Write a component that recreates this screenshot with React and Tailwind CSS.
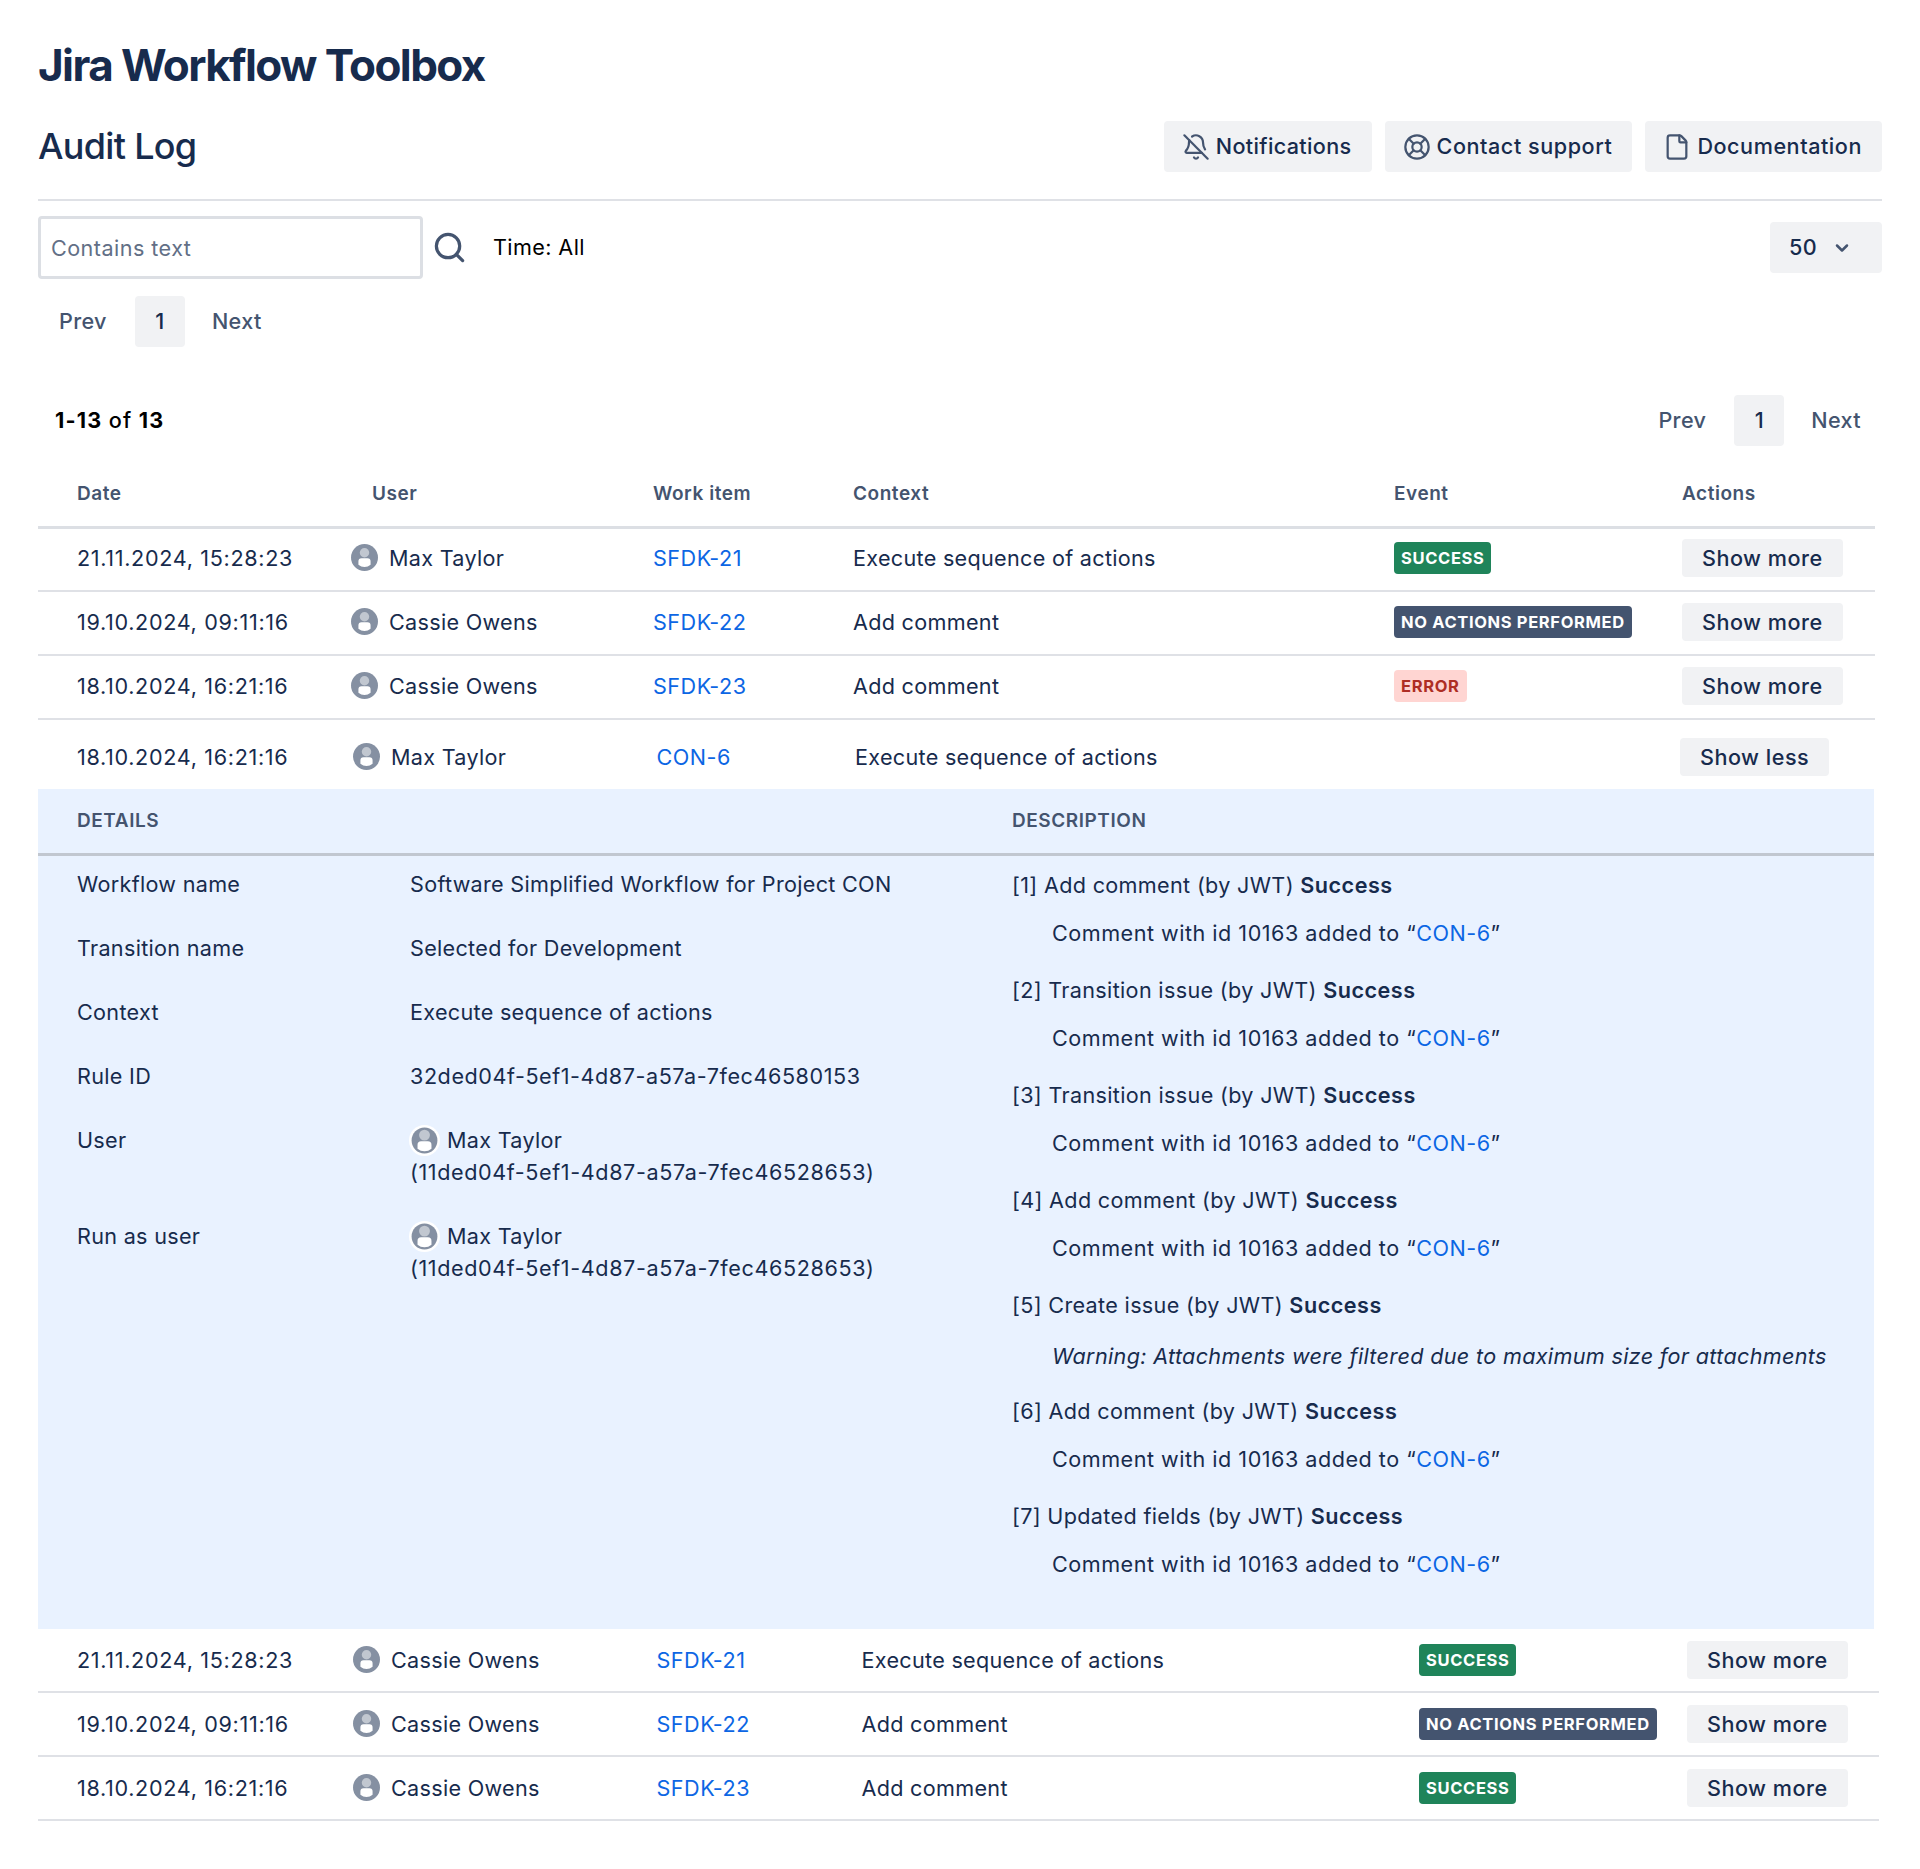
import React from 'react';
import { BellOff, LifeBuoy, File, Search, ChevronDown } from 'lucide-react';

const topRows = [
  { date: '21.11.2024, 15:28:23', user: 'Max Taylor', item: 'SFDK-21', context: 'Execute sequence of actions', event: 'success' },
  { date: '19.10.2024, 09:11:16', user: 'Cassie Owens', item: 'SFDK-22', context: 'Add comment', event: 'none' },
  { date: '18.10.2024, 16:21:16', user: 'Cassie Owens', item: 'SFDK-23', context: 'Add comment', event: 'error' },
];

const bottomRows = [
  { date: '21.11.2024, 15:28:23', user: 'Cassie Owens', item: 'SFDK-21', context: 'Execute sequence of actions', event: 'success' },
  { date: '19.10.2024, 09:11:16', user: 'Cassie Owens', item: 'SFDK-22', context: 'Add comment', event: 'none' },
  { date: '18.10.2024, 16:21:16', user: 'Cassie Owens', item: 'SFDK-23', context: 'Add comment', event: 'success' },
];

const details = [
  ['Workflow name', 'Software Simplified Workflow for Project CON', ''],
  ['Transition name', 'Selected for Development', ''],
  ['Context', 'Execute sequence of actions', ''],
  ['Rule ID', '32ded04f-5ef1-4d87-a57a-7fec46580153', 'tracking-[0.55px]'],
];

const steps = [
  { n: '[1] Add comment (by JWT)' },
  { n: '[2] Transition issue (by JWT)' },
  { n: '[3] Transition issue (by JWT)' },
  { n: '[4] Add comment (by JWT)' },
  { n: '[5] Create issue (by JWT)', warning: 'Warning: Attachments were filtered due to maximum size for attachments' },
  { n: '[6] Add comment (by JWT)' },
  { n: '[7] Updated fields (by JWT)' },
];

function Avatar({ ring }) {
  return (
    <svg viewBox="0 0 24 24" className={ring ? 'w-[31px] h-[31px] -ml-[1px] shrink-0' : 'w-[27px] h-[27px] shrink-0'}>
      {ring && <circle cx="12" cy="12" r="12" fill="#fff" />}
      <circle cx="12" cy="12" r={ring ? 10 : 12} fill="#8590a2" />
      <circle cx="12" cy="7.8" r="4.2" fill="#c1c7d0" />
      <path d="M6.6 15.4a2.8 2.8 0 0 1 2.8-2.8h5.2a2.8 2.8 0 0 1 2.8 2.8v3a8.4 8.4 0 0 1-10.8 0z" fill="#fff" />
    </svg>
  );
}

function Badge({ type }) {
  const base = 'inline-flex items-center h-[32px] px-[7px] rounded-[4px] text-[16.5px] font-bold tracking-[0.65px]';
  if (type === 'success') return <span className={`${base} bg-[#1f845a] text-white`}>SUCCESS</span>;
  if (type === 'none') return <span className={`${base} bg-[#44546f] text-white`}>NO ACTIONS PERFORMED</span>;
  return <span className={`${base} bg-[#ffd5d2] text-[#ae2e24]`}>ERROR</span>;
}

function Btn({ children }) {
  return (
    <button className="h-[38px] px-[20px] rounded-[4px] bg-[#f1f2f4] text-[#172b4d] font-medium tracking-[0.5px]">{children}</button>
  );
}

function HeadBtn({ icon, children, className = 'tracking-[0.55px]' }) {
  return (
    <button className={`h-[51px] pl-[18px] pr-[20px] flex items-center gap-[6px] rounded-[4px] bg-[#f1f2f4] text-[#172b4d] font-medium ${className}`}>
      {icon}
      {children}
    </button>
  );
}

function Pager() {
  return (
    <div className="flex items-center h-[51px] text-[#44546f] font-medium tracking-[0.35px]">
      <span className="pl-[21px] pr-[28px]">Prev</span>
      <span className="w-[50px] h-[51px] flex items-center justify-center rounded-[4px] bg-[#f1f2f4] text-[#172b4d]">1</span>
      <span className="pl-[27px] pr-[21px]">Next</span>
    </div>
  );
}

function UserCell({ name }) {
  return (
    <div className="flex items-center gap-[11px]">
      <Avatar />
      {name}
    </div>
  );
}

function Row({ r, cols, className = '' }) {
  return (
    <div className={`grid ${cols} items-center h-[64px] border-b-2 border-[#dfe1e6] ${className}`}>
      <div className="pl-[39px] tracking-[0.67px]">{r.date}</div>
      <UserCell name={r.user} />
      <a className="text-[#0c66e4] tracking-[0.5px]">{r.item}</a>
      <div>{r.context}</div>
      <div className="flex"><Badge type={r.event} /></div>
      <div className="flex"><Btn>Show more</Btn></div>
    </div>
  );
}

function UserValue({ name, id }) {
  return (
    <div className="leading-[32px]">
      <div className="flex items-center gap-[7px] h-[32px]">
        <Avatar ring />
        {name}
      </div>
      <div className="tracking-[0.6px]">{id}</div>
    </div>
  );
}

export default function App() {
  const iconCls = 'w-[28px] h-[28px] text-[#44546f]';
  return (
    <div className="min-h-[1869px] bg-white px-[38px] pt-[40px] pb-[47px] text-[21.6px] tracking-[0.3px] text-[#172b4d] [font-family:Inter,sans-serif]">
      <h1 className="text-[44px] leading-[50px] font-bold tracking-[-1.6px]">Jira Workflow Toolbox</h1>

      <div className="mt-[31px] flex items-center justify-between pb-[27px] border-b-2 border-[#dfe1e6]">
        <h2 className="text-[36px] leading-[51px] font-medium tracking-[-0.7px]">Audit Log</h2>
        <div className="flex gap-[13px]">
          <HeadBtn className="tracking-[0.35px]" icon={<BellOff className={iconCls} strokeWidth={1.9} />}>Notifications</HeadBtn>
          <HeadBtn icon={<LifeBuoy className={iconCls} strokeWidth={1.9} />}>Contact support</HeadBtn>
          <HeadBtn icon={<File className={iconCls} strokeWidth={1.9} />}>Documentation</HeadBtn>
        </div>
      </div>

      <div className="mt-[15px] flex items-center">
        <input
          placeholder="Contains text"
          className="w-[385px] h-[63px] px-[10px] border-[3px] border-[#dcdfe4] rounded-[4px] bg-white outline-none tracking-[0.45px] placeholder:text-[#626f86]"
        />
        <Search className="ml-[9px] w-[35px] h-[35px] text-[#44546f]" strokeWidth={2.2} />
        <span className="ml-[26px] text-black tracking-[0.4px]">Time: All</span>
        <button className="ml-auto w-[112px] h-[51px] pl-[19px] flex items-center gap-[15px] rounded-[4px] bg-[#f1f2f4] font-medium tracking-[0.5px]">
          50
          <ChevronDown className="w-[20px] h-[20px] text-[#44546f]" strokeWidth={3} />
        </button>
      </div>

      <div className="mt-[17px]"><Pager /></div>

      <div className="mt-[48px] flex items-center justify-between">
        <div className="pl-[17px] font-bold text-black tracking-[1.2px]">1-13 <span className="font-medium">of</span> 13</div>
        <Pager />
      </div>

      <div className="w-[1837px]">
        <div className="grid grid-cols-[313px_302px_200px_541px_288px_1fr] items-center pt-[32px] pb-[16px] -mb-[1px] border-b-[3px] border-[#dcdfe4] text-[19px] leading-[32px] font-semibold tracking-[0.55px] text-[#44546f]">
          <div className="pl-[39px]">Date</div>
          <div className="pl-[21px]">User</div>
          <div>Work item</div>
          <div>Context</div>
          <div>Event</div>
          <div>Actions</div>
        </div>
        {topRows.map(r => (
          <Row key={r.item} r={r} className="pb-[2px]" cols="grid-cols-[313px_302px_200px_541px_288px_1fr]" />
        ))}
      </div>

      <div className="w-[1836px]">
        <div className="grid grid-cols-[315px_303.5px_198.5px_825px_1fr] items-center h-[69px] pt-[5px]">
          <div className="pl-[39px] tracking-[0.67px]">18.10.2024, 16:21:16</div>
          <UserCell name="Max Taylor" />
          <a className="text-[#0c66e4] tracking-[0.5px]">CON-6</a>
          <div>Execute sequence of actions</div>
          <div className="flex"><Btn>Show less</Btn></div>
        </div>

        <div className="h-[840px] bg-[#e9f2ff]">
          <div className="grid grid-cols-[974px_1fr] items-center h-[67px] border-b-[3px] border-[#c1c7d0] text-[19px] font-semibold tracking-[0.55px] text-[#44546f]">
            <div className="pl-[39px]">DETAILS</div>
            <div>DESCRIPTION</div>
          </div>
          <div className="grid grid-cols-[974px_1fr] pt-[13px] leading-[32px]">
            <div className="pl-[39px] -mt-[1px]">
              <div className="grid grid-cols-[333px_1fr] gap-y-[32px]">
                {details.map(([k, v, t]) => (
                  <React.Fragment key={k}>
                    <div>{k}</div>
                    <div className={t}>{v}</div>
                  </React.Fragment>
                ))}
                <div>User</div>
                <UserValue name="Max Taylor" id="(11ded04f-5ef1-4d87-a57a-7fec46528653)" />
                <div>Run as user</div>
                <UserValue name="Max Taylor" id="(11ded04f-5ef1-4d87-a57a-7fec46528653)" />
              </div>
            </div>
            <div className="flex flex-col gap-[25px]">
              {steps.map(s => (
                <div key={s.n}>
                  <div className="tracking-[0.33px]">{s.n} <b className="font-semibold tracking-[0.5px]">Success</b></div>
                  {s.warning ? (
                    <div className="pl-[40px] mt-[19px] -mb-[2px] italic tracking-[0.33px]">{s.warning}</div>
                  ) : (
                    <div className="pl-[40px] mt-[16px] tracking-[0.5px]">Comment with id 10163 added to “<a className="text-[#0c66e4]">CON-6</a>”</div>
                  )}
                </div>
              ))}
            </div>
          </div>
        </div>
      </div>

      <div className="w-[1841px]">
        {bottomRows.map(r => (
          <Row key={r.item} r={r} cols="grid-cols-[315px_303.5px_205px_557.5px_268px_1fr]" />
        ))}
      </div>
    </div>
  );
}
